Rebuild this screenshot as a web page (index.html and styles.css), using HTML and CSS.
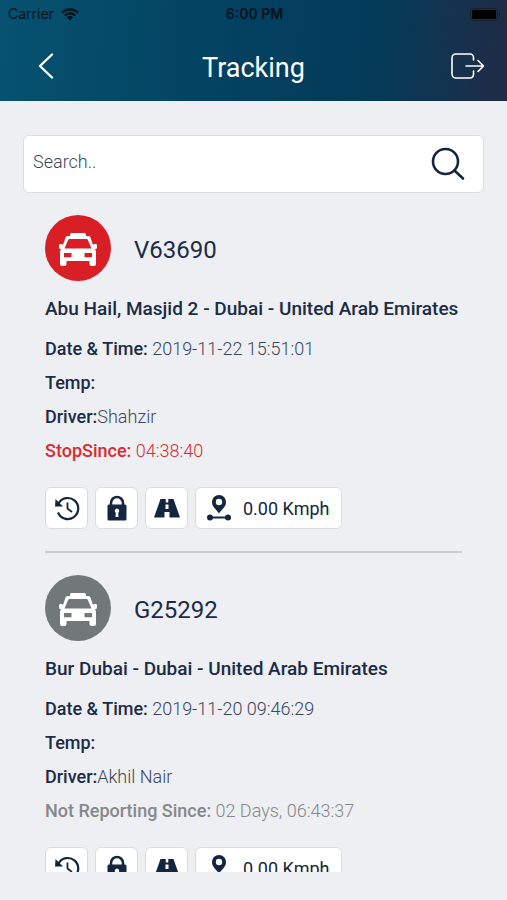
FILE: index.html
```html
<!DOCTYPE html>
<html lang="en">
<head>
<meta charset="utf-8">
<meta name="viewport" content="width=device-width, initial-scale=1">
<title>Tracking</title>
<link rel="stylesheet" href="styles.css">
</head>
<body>
<svg class="sprite" aria-hidden="true">
  <symbol id="taxi" viewBox="0 0 38 34">
    <path fill="currentColor" fill-rule="evenodd" d="M12 0h14q1 0 1 3h2.500q1.500 0 2 1.500L34 12q.5-1 1.500-1H37q1 0 1 1.500v2q0 1.500-1.500 1.500H36q1 1.500 1 3v11.500Q37 33 35 33h-2.500q-2 0-2-2v-3h-23v3q0 2-2 2H3q-2 0-2-2V19.500q0-2 1-3.500h-.5Q0 16 0 14.500v-2Q0 11 1 11h1.500q1 0 1.500 1l2.500-7.500Q7 3 8.500 3H11q0-3 1-3zM10.500 6Q9.500 6 9 7.200L5.500 15.500h27L29 7.200Q28.500 6 27.500 6zM5 20v4.200h7.500V20zM25.500 20v4.200H33V20z"/>
  </symbol>
  <symbol id="history" viewBox="0 0 26 26">
    <path fill="none" stroke="currentColor" stroke-width="2.200" d="M4.500 8.500A10.500 10.500 0 1 1 4 17.500"/>
    <path fill="none" stroke="currentColor" stroke-width="1.800" d="M13.500 7.500v6l4.500 3.500"/>
    <path fill="currentColor" d="M1.500 4 9 11.500H1z"/>
  </symbol>
  <symbol id="lock" viewBox="0 0 26 26">
    <path fill="none" stroke="currentColor" stroke-width="2.600" d="M7 12V8a6 6 0 0 1 12 0v4"/>
    <path fill="currentColor" fill-rule="evenodd" d="M5 9.500h16a1.500 1.500 0 0 1 1.500 1.500v13A1.500 1.500 0 0 1 21 25.500H5A1.500 1.500 0 0 1 3.500 24V11A1.500 1.500 0 0 1 5 9.500zm8 4a2.300 2.300 0 0 0-1.200 4.200L11.500 22h3l-.3-4.300A2.300 2.300 0 0 0 13 13.500z"/>
  </symbol>
  <symbol id="road" viewBox="0 0 26 26">
    <path fill="currentColor" fill-rule="evenodd" d="M6.500 4h5.200v3.500h2.600V4h5.200L26 22.500H15.500V17h-5v5.500H0zM11.500 9.500v4.500h3V9.500z"/>
  </symbol>
  <symbol id="route" viewBox="0 0 26 26">
    <path fill="currentColor" fill-rule="evenodd" d="M13 0a7 7 0 0 1 7 7.200C20 12 15.500 14.500 13 18.500 10.500 14.500 6 12 6 7.200A7 7 0 0 1 13 0zm0 3.800a3.200 3.200 0 1 0 0 6.400 3.200 3.200 0 0 0 0-6.400z"/>
    <path stroke="currentColor" stroke-width="2" d="M4 22.500h18"/>
    <circle cx="4" cy="22.500" r="3" fill="currentColor"/><circle cx="22" cy="22.500" r="3" fill="currentColor"/>
  </symbol>
</svg>

<div class="app">
  <header class="header">
    <div class="status">
      <div class="carrier">Carrier
        <svg width="18" height="13" viewBox="0 0 18 13" fill="none" stroke="currentColor" stroke-width="2.300"><path d="M1 4.500Q9-2 17 4.500M3.800 7.500Q9 3 14.200 7.500"/><path fill="currentColor" stroke="none" d="M5.800 9.300Q9 6.700 12.200 9.300L9 12.600z"/></svg>
      </div>
      <div class="clock">6:00 PM</div>
      <div class="power">
        <svg width="31" height="13" viewBox="0 0 31 13"><rect x=".5" y=".5" width="27" height="12" rx="3" fill="none" stroke="#000" opacity=".3"/><rect x="2" y="2" width="24" height="9" rx="1"/><path d="M29 4.500q2 2 0 4z" opacity=".4"/></svg>
      </div>
    </div>
    <div class="bar">
      <button class="nav" type="button" aria-label="Back">
        <svg width="16" height="26" viewBox="0 0 16 26" fill="none" stroke="currentColor" stroke-width="2.400" stroke-linecap="round" stroke-linejoin="round"><path d="M14 1.500 2 13l12 11.500"/></svg>
      </button>
      <h1 class="title">Tracking</h1>
      <button class="nav exit" type="button" aria-label="Log out">
        <svg width="34" height="26" viewBox="0 0 34 26" fill="none" stroke="currentColor" stroke-width="1.600" stroke-linecap="round" stroke-linejoin="round"><path d="M22.500 7V4.500A3.500 3.500 0 0 0 19 1H5a4 4 0 0 0-4 4v16a4 4 0 0 0 4 4h14a3.500 3.500 0 0 0 3.500-3.500V18M15 13h17.500M27 7.500l5.500 5.500-5.500 5.500"/></svg>
      </button>
    </div>
  </header>

  <main class="content">
    <form class="search" role="search">
      <input class="field" type="text" placeholder="Search.." aria-label="Search">
      <button class="find" type="button" aria-label="Search">
        <svg width="34" height="34" viewBox="0 0 34 34" fill="none" stroke="currentColor" stroke-width="2.600" stroke-linecap="round"><circle cx="14.500" cy="14.500" r="12.500"/><path d="M23.500 23.500l8.500 8"/></svg>
      </button>
    </form>

    <div class="list">
      <article class="vehicle">
        <div class="head">
          <span class="badge stopped"><svg width="38" height="34"><use href="#taxi"/></svg></span>
          <h2 class="plate">V63690</h2>
        </div>
        <p class="place">Abu Hail, Masjid 2 - Dubai - United Arab Emirates</p>
        <div class="details">
          <p><b>Date &amp; Time:</b> 2019-11-22 15:51:01</p>
          <p><b>Temp:</b></p>
          <p><b>Driver:</b>Shahzir</p>
          <p class="alert"><b>StopSince:</b> 04:38:40</p>
        </div>
        <div class="actions">
          <button class="action" type="button" aria-label="History"><svg width="26" height="26"><use href="#history"/></svg></button>
          <button class="action" type="button" aria-label="Lock"><svg width="26" height="26"><use href="#lock"/></svg></button>
          <button class="action" type="button" aria-label="Road"><svg width="26" height="26"><use href="#road"/></svg></button>
          <button class="action speed" type="button"><svg width="26" height="26"><use href="#route"/></svg>0.00 Kmph</button>
        </div>
      </article>

      <article class="vehicle">
        <div class="head">
          <span class="badge silent"><svg width="38" height="34"><use href="#taxi"/></svg></span>
          <h2 class="plate">G25292</h2>
        </div>
        <p class="place">Bur Dubai - Dubai - United Arab Emirates</p>
        <div class="details">
          <p><b>Date &amp; Time:</b> 2019-11-20 09:46:29</p>
          <p><b>Temp:</b></p>
          <p><b>Driver:</b>Akhil Nair</p>
          <p class="muted"><b>Not Reporting Since:</b> 02 Days, 06:43:37</p>
        </div>
        <div class="actions">
          <button class="action" type="button" aria-label="History"><svg width="26" height="26"><use href="#history"/></svg></button>
          <button class="action" type="button" aria-label="Lock"><svg width="26" height="26"><use href="#lock"/></svg></button>
          <button class="action" type="button" aria-label="Road"><svg width="26" height="26"><use href="#road"/></svg></button>
          <button class="action speed" type="button"><svg width="26" height="26"><use href="#route"/></svg>0.00 Kmph</button>
        </div>
      </article>
    </div>
  </main>
</div>
</body>
</html>
```
FILE: styles.css
```css
* { box-sizing: border-box; }
body, h1, h2, p { margin: 0; }
body {
  background: #edeff3;
  color: #1c2b45;
  font-family: Roboto, "Liberation Sans", sans-serif;
}
button {
  border: 0;
  padding: 0;
  background: none;
  color: inherit;
  font: inherit;
  cursor: pointer;
}
svg { display: block; flex: none; }
.sprite { position: absolute; width: 0; height: 0; }

.app {
  display: flex;
  flex-direction: column;
  height: 100vh;
  padding-bottom: 28px;
}

.header {
  flex: none;
  background: linear-gradient(94deg, #065270 0%, #03405f 50%, #043b59 74%, #1d2d48 97%);
}
.status {
  display: grid;
  grid-template-columns: 1fr auto 1fr;
  align-items: center;
  height: 28px;
  padding: 0 6px 0 8px;
  color: #06121c;
  font: 14px/28px Inter, sans-serif;
}
.carrier { display: flex; align-items: center; gap: 7px; }
.clock { font-weight: 600; }
.power { display: flex; justify-content: flex-end; }
.bar {
  display: grid;
  grid-template-columns: 1fr auto 1fr;
  align-items: center;
  height: 73px;
  padding: 2px 22px 0;
  color: #fff;
}
.nav {
  display: flex;
  align-items: center;
  height: 44px;
  padding: 0 0 0 16px;
}
.nav.exit { justify-content: flex-end; }
.title { padding-top: 4px; font-size: 27px; font-weight: 400; line-height: 32px; }

.content {
  flex: 1;
  min-height: 0;
  display: flex;
  flex-direction: column;
  padding-top: 34px;
}
.search {
  flex: none;
  display: flex;
  align-items: center;
  height: 58px;
  margin: 0 23px;
  padding: 0 18px 0 9px;
  background: #fff;
  border: 1px solid #d9dbdf;
  border-radius: 6px;
}
.field {
  flex: 1;
  min-width: 0;
  height: 50px;
  padding: 0 0 6px;
  border: 0;
  outline: 0;
  background: none;
  color: #1c2b45;
  font: 300 18px Roboto, sans-serif;
}
.field::placeholder { color: #3c4659; opacity: 1; }
.find { display: flex; color: #14263e; }

.list {
  flex: 1;
  min-height: 0;
  overflow: hidden;
  padding: 0 45px;
}
.vehicle {
  padding: 22px 0;
  border-bottom: 2px solid #c8cbd0;
}
.head { display: flex; align-items: center; gap: 23px; }
.badge {
  display: flex;
  align-items: center;
  justify-content: center;
  width: 66px;
  height: 66px;
  border-radius: 50%;
  color: #fff;
}
.badge svg { margin-top: 4px; }
.stopped { background: #d91f26; }
.silent { background: #727777; }
.plate { padding-top: 4px; font-size: 24px; font-weight: 400; line-height: 32px; }
.place {
  margin-top: 16px;
  font-size: 19px;
  font-weight: 500;
  line-height: 24px;
}
.details {
  margin-top: 11px;
  color: #3c4659;
  font-size: 18px;
  font-weight: 300;
  line-height: 34px;
}
.details b { color: #1c2b45; font-weight: 500; }
.details .alert, .details .alert b { color: #d92b31; }
.details .muted, .details .muted b { color: #858889; }

.actions { display: flex; gap: 7px; margin-top: 19px; }
.action {
  display: flex;
  align-items: center;
  justify-content: center;
  min-width: 43px;
  height: 42px;
  background: #fff;
  border: 1px solid #d9dbdf;
  border-radius: 6px;
  color: #14263e;
}
.speed {
  gap: 11px;
  padding: 2px 12px 0 10px;
  font-size: 18px;
  line-height: 24px;
}
.speed svg { margin-bottom: 2px; }
```
